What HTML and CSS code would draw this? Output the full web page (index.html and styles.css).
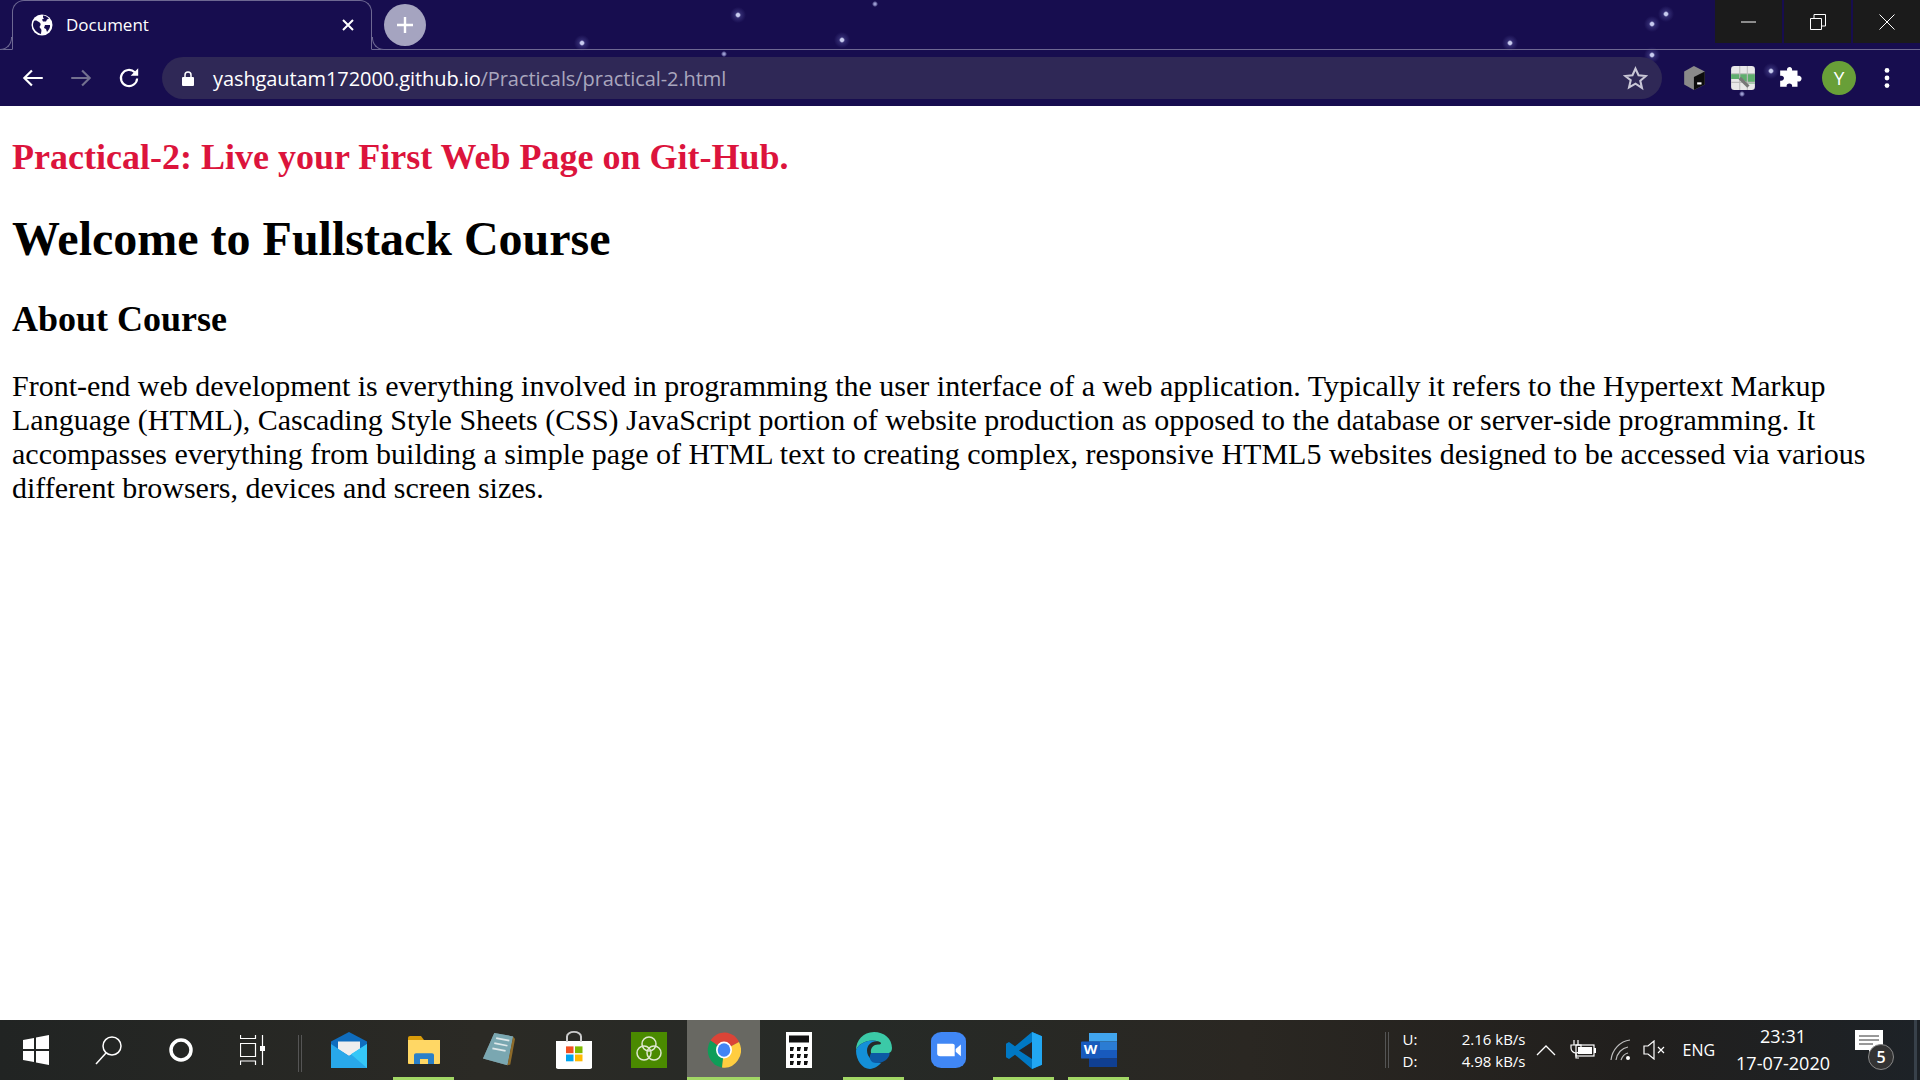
FILE: index.html
```html
<!DOCTYPE html>
<html lang="en">
<head>
    <meta charset="UTF-8">
    <meta name="viewport" content="width=device-width, initial-scale=1.0">
    <title>Document</title>
    <link rel="stylesheet" href="styles.css">
</head>
<body>
    <header class="browser">
        <div class="tabstrip">
            <div class="tab">
                <svg class="tab-icon" viewBox="0 0 22 22"><circle cx="11" cy="11" r="10.5" fill="#fff"/><path d="M3 7c2-1 3 0 5 1s2 3 1 4 0 2 1 3 0 3 0 5C6 19 2 15 2 11c0-1 .4-3 1-4zM12 1.500c2 0 4 1 6 3l-2 1-1 2h-3l-1-2 2-1-1-1zM14 11h5c.5 2-1 5-3 7l-1-3-2-1z" fill="#170d4f"/></svg>
                <span class="tab-title">Document</span>
                <svg class="tab-close" viewBox="0 0 12 12"><path d="M1 1l10 10M11 1L1 11" stroke="#fff" stroke-width="2"/></svg>
            </div>
            <div class="new-tab">
                <svg viewBox="0 0 18 18" width="18" height="18"><path d="M9 1v16M1 9h16" stroke="#fff" stroke-width="2.400"/></svg>
            </div>
            <div class="window-btns">
                <div class="window-btn"><svg viewBox="0 0 16 16" width="16" height="16"><path d="M0 8h15" stroke="#fff"/></svg></div>
                <div class="window-btn"><svg viewBox="0 0 16 16" width="16" height="16"><path d="M.5 4.500h11v11H.5zM4 4.500V.5h11.500V12h-4" fill="none" stroke="#fff"/></svg></div>
                <div class="window-btn"><svg viewBox="0 0 16 16" width="16" height="16"><path d="M.5.5l15 15M15.500.5l-15 15" stroke="#fff"/></svg></div>
            </div>
        </div>
        <div class="toolbar">
            <svg class="nav-btn" viewBox="0 0 24 24"><path d="M21 12H4M11 5l-7 7 7 7" fill="none" stroke="#fff" stroke-width="2"/></svg>
            <svg class="nav-btn" viewBox="0 0 24 24"><path d="M3 12h17M13 5l7 7-7 7" fill="none" stroke="#73708f" stroke-width="2"/></svg>
            <svg class="nav-btn" viewBox="0 0 24 24"><path d="M19.500 12.500a7.500 7.500 0 1 1-2.200-5.800" fill="none" stroke="#fff" stroke-width="2"/><path d="M20.500 3v7h-7z" fill="#fff"/></svg>
            <div class="omnibox">
                <svg class="lock" viewBox="0 0 12 15"><path d="M1 6h10a1 1 0 0 1 1 1v7a1 1 0 0 1-1 1H1a1 1 0 0 1-1-1V7a1 1 0 0 1 1-1z" fill="#fff"/><path d="M3 6V4a3 3 0 0 1 6 0v2" fill="none" stroke="#fff" stroke-width="1.500"/></svg>
                <span class="url">yashgautam172000.github.io<span class="url-path">/Practicals/practical-2.html</span></span>
                <svg class="star" viewBox="0 0 24 24"><path d="M12 2.500l2.900 6.400 7 .7-5.300 4.600 1.600 6.900L12 17l-6.200 3.600 1.600-6.900L2.100 9.600l7-.7z" fill="none" stroke="#c9c7d6" stroke-width="2"/></svg>
            </div>
            <div class="extensions">
                <svg class="ext" viewBox="0 0 24 24"><path d="M11 1l10 5v12l-10 5-9-5V6z" fill="#8a8a8a"/><path d="M11 11l10-5v12l-10 5z" fill="#0c0c0c"/><path d="M14 17h4" stroke="#fff" stroke-width="2"/></svg>
                <svg class="ext" viewBox="0 0 24 24"><rect x="1" y="1" width="22" height="22" rx="3" fill="#e8e8e8"/><path d="M1 8h22v9H17l-6-4H1z" fill="#5fae6e"/><path d="M9 1v22M16 1v22M1 8h22M1 16h22" stroke="#bcbcbc"/><path d="M9 12l8 8" stroke="#777" stroke-width="3"/></svg>
                <svg class="ext" viewBox="0 0 24 24"><path d="M9 2.500c2-1.500 4.500 0 4 2.500h5v5c2.500-.5 4.500 1.500 3.500 3.500s-2.500 2-3.500 1.500v5h-5c.5-2-1-3-2.500-3s-3 1-2.500 3H2v-5.500c2 .5 3.500-1 3.500-2.500S4 9.500 2 10V5h6.500c-.5-1 0-2 .5-2.500z" fill="#fff"/></svg>
                <div class="avatar">Y</div>
                <svg class="ext" viewBox="0 0 24 24"><circle cx="12" cy="5" r="2.200" fill="#fff"/><circle cx="12" cy="12" r="2.200" fill="#fff"/><circle cx="12" cy="19" r="2.200" fill="#fff"/></svg>
            </div>
        </div>
    </header>

    <main class="content">
        <h3>Practical-2: Live your First Web Page on Git-Hub.</h3>
        <h1>Welcome to Fullstack Course</h1>
        <h2>About Course</h2>
        <p>Front-end web development is everything involved in programming the user interface of a web application. Typically it refers to the Hypertext Markup Language (HTML), Cascading Style Sheets (CSS) JavaScript portion of website production as opposed to the database or server-side programming. It accompasses everything from building a simple page of HTML text to creating complex, responsive HTML5 websites designed to be accessed via various different browsers, devices and screen sizes.</p>
    </main>

    <footer class="taskbar">
        <div class="task-item system"><svg width="26" height="30" viewBox="0 0 26 30"><path d="M0 5l11-2v11H0zM13 2.500L26 0v14H13zM0 16h11v11L0 25zM13 16h13v14l-13-2.500z" fill="#fff"/></svg></div>
        <div class="task-item system"><svg width="28" height="30" viewBox="0 0 28 30"><circle cx="17" cy="11" r="9" fill="none" stroke="#fff" stroke-width="1.500"/><path d="M11 18L1 29" stroke="#fff" stroke-width="1.500"/></svg></div>
        <div class="task-item system"><svg width="26" height="26" viewBox="0 0 26 26"><circle cx="13" cy="13" r="10" fill="none" stroke="#fff" stroke-width="3.500"/></svg></div>
        <div class="task-item system"><svg width="28" height="30" viewBox="0 0 28 30"><path d="M.5 0v3.500h15V0M.5 8.500h15v13H.5zM.5 30v-4h15v4M22.500 0v30" fill="none" stroke="#fff" stroke-width="1.200"/><rect x="20" y="11" width="5" height="5" fill="#fff"/></svg></div>
        <div class="task-sep"></div>
        <div class="task-item"><svg width="36" height="36" viewBox="0 0 36 42" preserveAspectRatio="none"><path d="M18 0l18 11v31H0V11z" fill="#0f6cbd"/><path d="M7 11h22v9l-11 8-11-8z" fill="#eee"/><path d="M0 14l18 14 18-14v28H0z" fill="#28a8ea"/><path d="M36 14v28L20 26z" fill="#35c7f7"/></svg></div>
        <div class="task-item running"><svg width="32" height="28" viewBox="0 0 32 34" preserveAspectRatio="none"><path d="M0 2a2 2 0 0 1 2-2h11l3 5h16v29H0z" fill="#d99c0a"/><path d="M0 5h32v27a2 2 0 0 1-2 2H2a2 2 0 0 1-2-2z" fill="#ffd765"/><path d="M6 34V23a2 2 0 0 1 2-2h16a2 2 0 0 1 2 2v11h-6v-6h-8v6z" fill="#2a80c9"/></svg></div>
        <div class="task-item"><svg width="32" height="34" viewBox="0 0 34 40" preserveAspectRatio="none"><path d="M12 0l20 4-6 34L0 30z" fill="#a9b9bf"/><path d="M12 0l20 4-6 34L0 30z" fill="#5b9ba8" opacity=".6"/><path d="M26 38l6-34 2 3-5 30z" fill="#8e6b2a"/><path d="M14 6l14 3M12 12l14 3M10 18l14 3" stroke="#dfe8ea" stroke-width="2"/></svg></div>
        <div class="task-item"><svg width="36" height="38" viewBox="0 0 36 42" preserveAspectRatio="none"><path d="M0 11h36v29a2 2 0 0 1-2 2H2a2 2 0 0 1-2-2z" fill="#fff"/><path d="M11 12V6a7 5 0 0 1 14 0v6" fill="none" stroke="#ccc" stroke-width="2"/><rect x="10" y="17" width="7.500" height="7.500" fill="#f25022"/><rect x="19" y="17" width="7.500" height="7.500" fill="#7fba00"/><rect x="10" y="26" width="7.500" height="7.500" fill="#00a4ef"/><rect x="19" y="26" width="7.500" height="7.500" fill="#ffb900"/></svg></div>
        <div class="task-item"><svg width="36" height="36" viewBox="0 0 36 36"><rect width="36" height="36" fill="#4a8a00"/><g fill="none" stroke="#dfe8d0" stroke-width="1.500"><circle cx="18" cy="12" r="7"/><circle cx="13" cy="21" r="7"/><circle cx="23" cy="21" r="7"/></g></svg></div>
        <div class="task-item active"><svg width="34" height="36" viewBox="0 0 34 34" preserveAspectRatio="none"><path d="M17 17L3.500 8A16.500 16.500 0 0 1 32 9.500z" fill="#db4437"/><path d="M17 17L3.500 8A16.500 16.500 0 0 0 15 33.500z" fill="#0f9d58"/><path d="M17 17L32 9.500A16.500 16.500 0 0 1 15 33.500z" fill="#ffcd40"/><circle cx="17" cy="17" r="8" fill="#fff"/><circle cx="17" cy="17" r="6.300" fill="#4285f4"/></svg></div>
        <div class="task-item"><svg width="26" height="36" viewBox="0 0 26 36"><rect width="26" height="36" fill="#fff"/><rect x="3" y="3.500" width="20" height="7" fill="#111"/><g fill="#111"><path d="M4 15h4l-1 4H4zM11 15h4l-1 4h-3zM18 15h4l-1 4h-3zM4 22h4l-1 4H4zM11 22h4l-1 4h-3zM18 22h4l-1 4h-3zM4 29h4l-1 4H4zM11 29h4l-1 4h-3zM18 29h4l-1 4h-3z"/></g></svg></div>
        <div class="task-item running"><svg width="36" height="37" viewBox="0 0 36 44" preserveAspectRatio="none"><path d="M18 0c10 0 18 8 18 19 0 3-1 5-3 6H15c-1-6 3-10 7-10 4 0 4-3 0-4C12 8 2 14 0 22 0 10 7 0 18 0z" fill="#3bc9a7"/><path d="M0 22C2 14 12 8 22 11c-6-1-11 4-11 11 0 8 6 14 14 15-2 3-7 7-11 7C6 44 0 33 0 22z" fill="#1490d8"/><path d="M15 25h18c2 0-1 12-13 12-5 0-8-6-5-12z" fill="#0c59a4"/></svg></div>
        <div class="task-item"><svg width="35" height="36" viewBox="0 0 34 40" preserveAspectRatio="none"><rect width="34" height="40" rx="10" fill="#4087f5"/><path d="M6 13h15a2 2 0 0 1 2 2v12H9a3 3 0 0 1-3-3z" fill="#fff"/><path d="M24 19l5-5v13l-5-5z" fill="#fff"/></svg></div>
        <div class="task-item running"><svg width="36" height="37" viewBox="0 0 36 44" preserveAspectRatio="none"><path d="M26 0l10 5v34l-10 5-17-17-6 5-3-2v-16l3-2 6 5z" fill="#0078c4"/><path d="M26 0l10 5v34l-10 5z" fill="#22a7f2"/><path d="M26 12L13 22l13 10z" fill="#23252a"/></svg></div>
        <div class="task-item running"><svg width="36" height="34" viewBox="0 0 36 40" preserveAspectRatio="none"><rect x="8" y="0" width="28" height="10" fill="#41a5ee"/><rect x="8" y="10" width="28" height="10" fill="#2b7cd3"/><rect x="8" y="20" width="28" height="10" fill="#185abd"/><rect x="8" y="30" width="28" height="10" fill="#103f91"/><rect x="0" y="10" width="19" height="20" rx="1" fill="#185abd"/><text x="9.500" y="25" class="word-letter">W</text></svg></div>

        <div class="tray">
            <div class="tray-sep"></div>
            <div class="netmeter">
                <div class="net-labels"><span>U:</span><span>D:</span></div>
                <div class="net-speeds"><span>2.16 kB/s</span><span>4.98 kB/s</span></div>
            </div>
            <svg class="tray-icon" width="20" height="12" viewBox="0 0 20 12"><path d="M1 11l9-9 9 9" fill="none" stroke="#fff" stroke-width="1.300"/></svg>
            <svg class="tray-icon" width="28" height="20" viewBox="0 0 28 20"><path d="M5 0v5M9 0v5M2 5h10v3a5 5 0 0 1-10 0zM7 13v5h3" fill="none" stroke="#fff" stroke-width="1.200"/><rect x="7" y="5" width="18" height="11" fill="none" stroke="#fff" stroke-width="1.200"/><rect x="9" y="7" width="14" height="7" fill="#fff"/><rect x="25" y="8" width="2" height="5" fill="#fff"/></svg>
            <svg class="tray-icon tray-wifi" width="24" height="22" viewBox="0 0 24 22"><path d="M1 21C2 11 10 2 20 1M6 21c1-7 6-12 12-13M11 21c1-3 3-6 7-7" fill="none" stroke="#bdbdbd" stroke-width="1.200"/><circle cx="18" cy="19" r="2" fill="#fff"/></svg>
            <svg class="tray-icon" width="24" height="20" viewBox="0 0 24 20"><path d="M1 6h4l6-5v18l-6-5H1z" fill="none" stroke="#fff" stroke-width="1.200"/><path d="M15 7l6 6M21 7l-6 6" stroke="#fff" stroke-width="1.200"/></svg>
            <span class="lang">ENG</span>
            <div class="clock"><span>23:31</span><span>17-07-2020</span></div>
            <div class="notify">
                <svg width="28" height="26" viewBox="0 0 28 26"><path d="M0 0h28v20h-8l-5 6-1-6H0z" fill="#fff"/><path d="M4 6h20M4 10h20M4 14h14" stroke="#333"/></svg>
                <span class="notify-count">5</span>
            </div>
            <div class="show-desktop"></div>
        </div>
    </footer>
</body>
</html>
```

FILE: styles.css
```css
* {
    box-sizing: border-box;
}

body {
    margin: 0;
    height: 1080px;
    overflow: hidden;
    display: flex;
    flex-direction: column;
    background-color: #fff;
}

/* browser chrome */
.browser {
    --star: radial-gradient(circle 8px, #c9cdf0 0 1.5px, rgba(110, 110, 190, 0.3) 3px, transparent 8px);
    --star-small: radial-gradient(circle 8px, #9a9bd0 0 1px, transparent 3px);
    height: 106px;
    flex-shrink: 0;
    background-color: #170d4f;
    background-image:
        var(--star), var(--star), var(--star), var(--star), var(--star), var(--star), var(--star), var(--star),
        var(--star-small), var(--star-small), var(--star-small);
    background-size: 16px 16px;
    background-repeat: no-repeat;
    background-position:
        730px 7px, 574px 35px, 834px 32px, 1502px 35px, 1658px 6px,
        1644px 16px, 1644px 47px, 1763px 63px, 716px 46px, 867px -4px, 1734px 86px;
}

.tabstrip {
    height: 50px;
    display: flex;
    align-items: flex-start;
    border-bottom: 1px solid #6d6892;
}

.tab {
    position: relative;
    width: 360px;
    height: 50px;
    margin-left: 12px;
    padding: 0 16px 0 18px;
    display: flex;
    align-items: center;
    background-color: #170d4f;
    border: 1px solid #6d6892;
    border-bottom: 1px solid #170d4f;
    border-radius: 12px 12px 0 0;
    color: #fff;
}

/* the flared foot on each side of the tab */
.tab::before,
.tab::after {
    content: "";
    position: absolute;
    bottom: -1px;
    width: 12px;
    height: 12px;
    background-color: #170d4f;
    border-bottom: 1px solid #6d6892;
}

.tab::before {
    right: 100%;
    margin-right: 1px;
    border-right: 1px solid #6d6892;
    border-bottom-right-radius: 12px;
}

.tab::after {
    left: 100%;
    margin-left: 1px;
    border-left: 1px solid #6d6892;
    border-bottom-left-radius: 12px;
}

.tab-icon {
    width: 22px;
    height: 22px;
    flex-shrink: 0;
}

.tab-title {
    margin-left: 13px;
    margin-bottom: 2px;
    flex: 1;
    font-family: "Open Sans", sans-serif;
    font-size: 17px;
}

.tab-close {
    width: 12px;
    height: 12px;
    margin-right: 1px;
}

.new-tab {
    width: 42px;
    height: 42px;
    margin: 4px 0 0 12px;
    border-radius: 50%;
    background-color: #a5a4c0;
    display: flex;
    align-items: center;
    justify-content: center;
}

.window-btns {
    margin-left: auto;
    height: 43px;
    display: flex;
    gap: 2px;
}

.window-btn {
    width: 67px;
    height: 43px;
    background-color: #1b1b1b;
    display: flex;
    align-items: center;
    justify-content: center;
}

.toolbar {
    height: 56px;
    display: flex;
    align-items: center;
    padding: 0 0 0 20px;
}

.nav-btn {
    width: 26px;
    height: 26px;
    margin-right: 22px;
    flex-shrink: 0;
}

.omnibox {
    width: 1500px;
    height: 42px;
    margin-left: -2px;
    border-radius: 21px;
    background-color: #2f2856;
    display: flex;
    align-items: center;
    padding: 0 14px 0 20px;
}

.lock {
    width: 12px;
    height: 15px;
    flex-shrink: 0;
}

.url {
    margin-left: 19px;
    flex: 1;
    font-family: "Open Sans", sans-serif;
    font-size: 20px;
    letter-spacing: -0.09px;
    color: #fff;
}

.url-path {
    color: #a9a6bd;
}

.star {
    width: 25px;
    height: 25px;
}

.extensions {
    display: flex;
    align-items: center;
    margin-left: 20px;
    gap: 22px;
}

.ext {
    width: 26px;
    height: 26px;
}

.avatar {
    width: 34px;
    height: 34px;
    margin: 0 -4px;
    border-radius: 50%;
    background-color: #689f38;
    color: #fff;
    font-family: "Open Sans", sans-serif;
    font-size: 19px;
    display: flex;
    align-items: center;
    justify-content: center;
}

/* page */
.content {
    flex: 1;
    padding: 0 12px;
    font-family: "Liberation Serif", serif;
    color: #000;
}

.content h3 {
    margin: 30px 0 0;
    font-size: 36px;
    color: crimson;
}

.content h1 {
    margin: 33px 0 0;
    font-size: 48px;
}

.content h2 {
    margin: 32px 0 0;
    font-size: 36px;
}

.content p {
    margin: 29px 0 0;
    font-size: 30px;
    line-height: 34px;
}

/* taskbar */
.taskbar {
    height: 60px;
    flex-shrink: 0;
    display: flex;
    align-items: stretch;
    background: linear-gradient(90deg, #212423 0%, #2b2a25 25%, #262a27 45%, #2a2722 65%, #211f1d 85%, #1d2227 100%);
    color: #fff;
}

.task-item {
    width: 73px;
    margin-right: 2px;
    display: flex;
    align-items: center;
    justify-content: center;
    flex-shrink: 0;
}

.task-item.system {
    width: 72.5px;
    margin-right: 0;
}

.task-item.running {
    box-shadow: inset 0 -3px 0 0 #a2d765;
    clip-path: inset(0 6px 0 6px);
}

.task-item.active {
    background-color: #686862;
    box-shadow: inset 0 -3px 0 #a2d765;
}

.task-sep {
    width: 4px;
    margin: 15px 10px 8px 8px;
    border-left: 1px solid #555;
    border-right: 1px solid #555;
    flex-shrink: 0;
}

.word-letter {
    font-family: "Open Sans", sans-serif;
    font-size: 14px;
    font-weight: 700;
    fill: #fff;
    text-anchor: middle;
}

.tray {
    margin-left: auto;
    display: flex;
    align-items: center;
    font-family: "Open Sans", sans-serif;
}

.tray-sep {
    width: 4px;
    height: 36px;
    border-left: 1px solid #555;
    border-right: 1px solid #555;
    margin-right: 14px;
}

.netmeter {
    display: flex;
    width: 123px;
    justify-content: space-between;
    font-size: 15px;
    line-height: 22px;
    margin-right: 10px;
}

.net-labels,
.net-speeds {
    display: flex;
    flex-direction: column;
}

.net-speeds {
    align-items: flex-end;
}

.tray-icon {
    margin-right: 13px;
    flex-shrink: 0;
}

.tray-wifi {
    margin-right: 9px;
}

.lang {
    font-size: 16px;
    margin: 0 21px 0 3px;
}

.clock {
    display: flex;
    flex-direction: column;
    align-items: center;
    font-size: 18px;
    line-height: 27px;
    margin-right: 25px;
}

.notify {
    position: relative;
    width: 42px;
    height: 40px;
    margin-right: 14px;
}

.notify-count {
    position: absolute;
    left: 13px;
    top: 14px;
    width: 26px;
    height: 26px;
    border-radius: 50%;
    border: 1px solid #888;
    background-color: #333;
    font-size: 16px;
    font-weight: 600;
    text-align: center;
    line-height: 24px;
}

.show-desktop {
    width: 3px;
    height: 60px;
    margin-left: 3px;
    margin-right: 3px;
    background-color: #38414a;
}
```
